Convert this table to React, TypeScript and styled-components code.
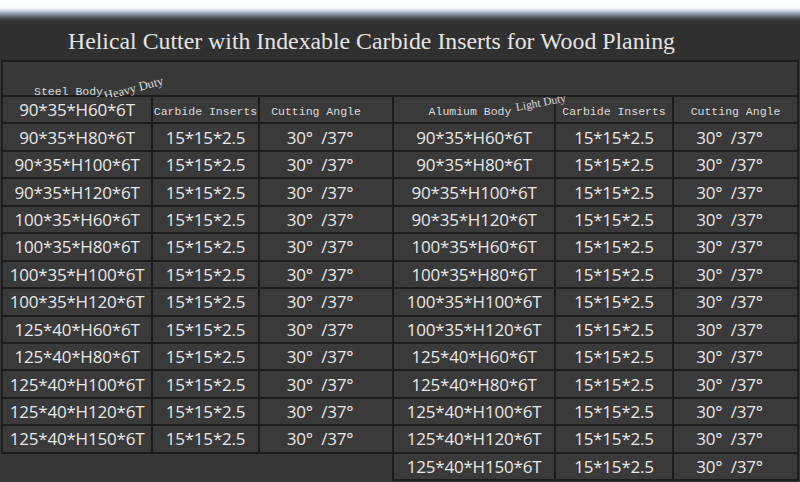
import React from "react";
import styled, { createGlobalStyle } from "styled-components";

const GlobalStyle = createGlobalStyle`
  html, body {
    margin: 0;
    padding: 0;
    background: #363636;
  }
`;

const LINE = "#1d1d1d";
const CELL = "#3a3a3a";

const steelRows = [
  "90*35*H80*6T",
  "90*35*H100*6T",
  "90*35*H120*6T",
  "100*35*H60*6T",
  "100*35*H80*6T",
  "100*35*H100*6T",
  "100*35*H120*6T",
  "125*40*H60*6T",
  "125*40*H80*6T",
  "125*40*H100*6T",
  "125*40*H120*6T",
  "125*40*H150*6T",
];

const aluRows = [
  "90*35*H60*6T",
  "90*35*H80*6T",
  "90*35*H100*6T",
  "90*35*H120*6T",
  "100*35*H60*6T",
  "100*35*H80*6T",
  "100*35*H100*6T",
  "100*35*H120*6T",
  "125*40*H60*6T",
  "125*40*H80*6T",
  "125*40*H100*6T",
  "125*40*H120*6T",
  "125*40*H150*6T",
];

const INSERT = "15*15*2.5";
const ANGLE = "30°\u00a0 /37°";

export default function App() {
  return (
    <>
      <GlobalStyle />
      <Page>
        <TopStrip />
        <TitleBar>
          <Title>Helical Cutter with Indexable Carbide Inserts for Wood Planing</Title>
        </TitleBar>
        <CaptionBand>
          <Caption>Steel Body</Caption>
          <Tilted $angle={-15} $shift={7}>Heavy Duty</Tilted>
        </CaptionBand>
        <Tables>
          <LeftTable>
            <Cell>90*35*H60*6T</Cell>
            <Cell $label>Carbide Inserts</Cell>
            <Cell $label $nudge={-10}>Cutting Angle</Cell>
            {steelRows.map((code) => (
              <React.Fragment key={code}>
                <Cell>{code}</Cell>
                <Cell>{INSERT}</Cell>
                <Cell $nudge={-6}>{ANGLE}</Cell>
              </React.Fragment>
            ))}
          </LeftTable>
          <RightTable>
            <Cell $label $nudge={-4}>
              Alumium Body
              <LightDuty>Light Duty</LightDuty>
            </Cell>
            <Cell $label>Carbide Inserts</Cell>
            <Cell $label>Cutting Angle</Cell>
            {aluRows.map((code) => (
              <React.Fragment key={code}>
                <Cell>{code}</Cell>
                <Cell>{INSERT}</Cell>
                <Cell $nudge={-6}>{ANGLE}</Cell>
              </React.Fragment>
            ))}
          </RightTable>
        </Tables>
      </Page>
    </>
  );
}

const Page = styled.div`
  width: 800px;
  height: 482px;
  overflow: hidden;
  background: #363636;
  display: flex;
  flex-direction: column;
`;

const TopStrip = styled.div`
  height: 22px;
  flex-shrink: 0;
  background: linear-gradient(
    to bottom,
    #ffffff 0px,
    #f8fafd 8px,
    #c3cedc 11px,
    #8795a8 14px,
    #5a6068 17px,
    #3a3a3b 20px,
    #323232 22px
  );
`;

const TitleBar = styled.div`
  height: 38px;
  flex-shrink: 0;
  display: flex;
  align-items: center;
  padding-left: 68px;
  background: #303030;
`;

const Title = styled.h1`
  margin: 0;
  font-family: "Liberation Serif", "Times New Roman", serif;
  font-weight: normal;
  font-size: 23.8px;
  color: #e4e4e4;
  white-space: nowrap;
  line-height: 1;
  padding-top: 2px;
`;

const CaptionBand = styled.div`
  height: 33px;
  margin: 0 1px;
  border: 2px solid ${LINE};
  display: flex;
  align-items: flex-end;
  padding-left: 31px;
  background: #383838;
`;

const Caption = styled.span`
  font-family: "Liberation Mono", "Courier New", monospace;
  font-size: 11.5px;
  color: #dadada;
  line-height: 1;
  margin-bottom: -2px;
`;

const Tilted = styled.span<{ $angle: number; $shift: number }>`
  font-family: "Liberation Serif", "Times New Roman", serif;
  font-size: 12.5px;
  color: #dcdcdc;
  line-height: 1;
  margin-left: 3px;
  display: inline-block;
  transform-origin: left bottom;
  transform: translateY(${(p) => p.$shift}px) rotate(${(p) => p.$angle}deg);
`;

const Tables = styled.div`
  display: flex;
  align-items: flex-start;
  margin-left: 1px;
`;

const TableGrid = styled.div`
  display: grid;
  grid-auto-rows: 25.44px;
  gap: 2px;
  background: ${LINE};
`;

const LeftTable = styled(TableGrid)`
  grid-template-columns: 148px 105px 132px;
  padding: 0 0 2px 2px;
`;

const RightTable = styled(TableGrid)`
  grid-template-columns: 160px 116px 123px;
  padding: 0 2px 2px 2px;
`;

const Cell = styled.div<{ $label?: boolean; $nudge?: number }>`
  position: relative;
  display: flex;
  align-items: center;
  justify-content: center;
  background: ${CELL};
  color: ${(p) => (p.$label ? "#dadada" : "#e8e8e8")};
  font-family: ${(p) =>
    p.$label
      ? `"Liberation Mono", "Courier New", monospace`
      : `"Open Sans", "Noto Sans", sans-serif`};
  font-size: ${(p) => (p.$label ? "11.5px" : "17px")};
  letter-spacing: ${(p) => (p.$label ? "0" : "-0.2px")};
  white-space: pre;
  padding-right: ${(p) => (p.$nudge ? -p.$nudge * 2 : 0)}px;
  padding-top: ${(p) => (p.$label ? 3 : 0)}px;
`;

const LightDuty = styled.span`
  position: absolute;
  z-index: 2;
  left: 123px;
  top: 4px;
  font-family: "Liberation Serif", "Times New Roman", serif;
  font-size: 11.5px;
  color: #dcdcdc;
  white-space: nowrap;
  transform: rotate(-11deg);
  transform-origin: left bottom;
`;
